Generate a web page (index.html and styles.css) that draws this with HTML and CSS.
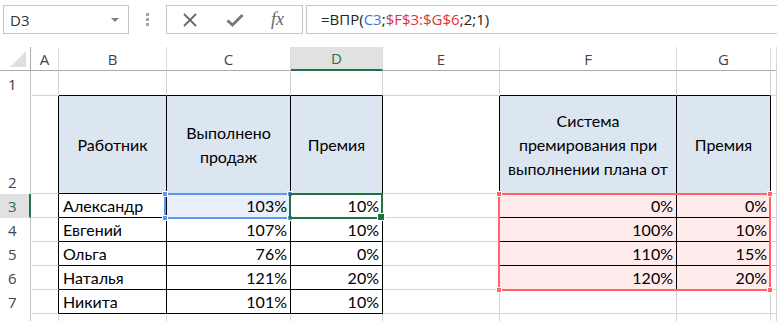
FILE: index.html
```html
<!DOCTYPE html>
<html lang="ru">
<head>
  <meta charset="UTF-8">
  <meta name="viewport" content="width=device-width, initial-scale=1.0">
  <title>ВПР — премия</title>
  <link rel="stylesheet" href="styles.css">
</head>
<body>
<div class="toolbar">
  <div class="name-box"><span>D3</span><span class="drop"></span></div>
  <div class="grip"><i></i><i></i><i></i></div>
  <div class="fx-box">
    <svg width="16" height="16" viewBox="0 0 16 16"><path d="M2 2 L14 14 M14 2 L2 14" stroke="#6a6a6a" stroke-width="1.8" fill="none"/></svg>
    <svg width="18" height="16" viewBox="0 0 18 16"><path d="M1.5 8.5 L6.5 13 L16.5 3" stroke="#7a7a7a" stroke-width="3" fill="none"/></svg>
    <span class="fx">fx</span>
  </div>
  <div class="formula">=ВПР(<span class="ref-blue">C3</span>;<span class="ref-red">$F$3:$G$6</span>;2;1)</div>
</div>

<div class="sheet-wrap">
  <table class="sheet">
    <colgroup>
      <col class="w-rh"><col class="w-a"><col class="w-b"><col class="w-c"><col class="w-d">
      <col class="w-e"><col class="w-f"><col class="w-g"><col class="w-h">
    </colgroup>
    <tr class="r-head">
      <th class="corner"></th><th>A</th><th>B</th><th>C</th><th class="col-sel">D</th><th>E</th><th>F</th><th>G</th><th></th>
    </tr>
    <tr class="r-1">
      <td class="rh">1</td><td></td><td class="bb"></td><td class="bb"></td><td class="bb"></td><td></td><td class="bb"></td><td class="bb"></td><td></td>
    </tr>
    <tr class="r-2">
      <td class="rh">2</td><td class="rb"></td>
      <td class="hd">Работник</td><td class="hd">Выполнено продаж</td><td class="hd">Премия</td>
      <td class="rb"></td>
      <td class="hd">Система премирования при выполнении плана от</td><td class="hd">Премия</td><td></td>
    </tr>
    <tr class="r-n">
      <td class="rh row-sel">3</td><td class="rb"></td>
      <td class="t">Александр</td><td class="t num ref-fill">103%</td><td class="t num">10%</td>
      <td class="rb"></td>
      <td class="t num pink">0%</td><td class="t num pink">0%</td><td></td>
    </tr>
    <tr class="r-n">
      <td class="rh">4</td><td class="rb"></td>
      <td class="t">Евгений</td><td class="t num">107%</td><td class="t num">10%</td>
      <td class="rb"></td>
      <td class="t num pink">100%</td><td class="t num pink">10%</td><td></td>
    </tr>
    <tr class="r-n">
      <td class="rh">5</td><td class="rb"></td>
      <td class="t">Ольга</td><td class="t num">76%</td><td class="t num">0%</td>
      <td class="rb"></td>
      <td class="t num pink">110%</td><td class="t num pink">15%</td><td></td>
    </tr>
    <tr class="r-n">
      <td class="rh">6</td><td class="rb"></td>
      <td class="t">Наталья</td><td class="t num">121%</td><td class="t num">20%</td>
      <td class="rb"></td>
      <td class="t num pink">120%</td><td class="t num pink">20%</td><td></td>
    </tr>
    <tr class="r-n">
      <td class="rh">7</td><td class="rb"></td>
      <td class="t">Никита</td><td class="t num">101%</td><td class="t num">10%</td>
      <td></td><td></td><td></td><td></td>
    </tr>
    <tr class="r-n">
      <td class="rh"></td><td></td><td></td><td></td><td></td><td></td><td></td><td></td><td></td>
    </tr>
  </table>

  <!-- рамки выделения поверх сетки -->
  <div class="sel sel-ref"><i class="h tl"></i><i class="h bl"></i><i class="h tr"></i><i class="h br"></i></div>
  <div class="sel sel-range"><i class="h tl"></i><i class="h bl"></i><i class="h tr"></i><i class="h br"></i></div>
  <div class="sel sel-active"><i class="fill-handle"></i></div>
</div>
</body>
</html>
```

FILE: styles.css
```css
body {
  margin: 0;
  width: 777px;
  height: 321px;
  overflow: hidden;
  background: #fff;
  font-family: "Open Sans", sans-serif;
  color: #222;
}

/* строка формул */
.toolbar {
  display: flex;
  height: 29px;
  padding-top: 5px;
}
.name-box {
  box-sizing: border-box;
  width: 126px;
  margin-left: 3px;
  border: 1px solid #c6c6c6;
  display: flex;
  align-items: center;
  justify-content: space-between;
  padding: 0 9px 0 6px;
  font-size: 15px;
  color: #333;
}
.drop {
  border-left: 4px solid transparent;
  border-right: 4px solid transparent;
  border-top: 4px solid #808080;
}
.grip {
  width: 37px;
  display: flex;
  flex-direction: column;
  align-items: center;
  justify-content: center;
  gap: 2px;
}
.grip i {
  width: 3px;
  height: 3px;
  background: #a6a6a6;
}
.fx-box {
  box-sizing: border-box;
  width: 137px;
  border: 1px solid #c6c6c6;
  display: grid;
  grid-template-columns: 1fr 1fr 1fr;
  align-items: center;
  justify-items: center;
}
.fx {
  font-family: "Liberation Serif", serif;
  font-style: italic;
  font-size: 18px;
  color: #666;
  margin-right: 4px;
}
.formula {
  flex: 1;
  margin-left: 3px;
  border: 1px solid #c6c6c6;
  border-right: none;
  padding-left: 14px;
  font-size: 15px;
  line-height: 27px;
  color: #222;
}
.ref-blue { color: #3a78d8; }
.ref-red { color: #d8373c; }

/* лист */
.sheet-wrap {
  position: relative;
  margin-top: 13px;
  height: 274px;
  overflow: hidden;
}
.sheet {
  table-layout: fixed;
  width: 777px;
  border-collapse: separate;
  border-spacing: 0;
  font-family: "Lato", sans-serif;
  font-size: 16px;
  color: #000;
}
.w-rh { width: 31px; }
.w-a { width: 28px; }
.w-b { width: 108px; }
.w-c { width: 124px; }
.w-d { width: 92px; }
.w-e { width: 117px; }
.w-f { width: 177px; }
.w-g { width: 94px; }
.w-h { width: 6px; }

.sheet td, .sheet th {
  box-sizing: border-box;
  padding: 0 4px;
  border-right: 1px solid #d4d4d4;
  border-bottom: 1px solid #d4d4d4;
  white-space: nowrap;
  overflow: hidden;
}
.r-head { height: 24px; }
.r-1 { height: 25px; }
.r-2 { height: 98px; }
.r-n { height: 24px; }
.r-n:first-of-type { height: 25px; }

.sheet th {
  font-family: "Open Sans", sans-serif;
  font-weight: normal;
  font-size: 15px;
  color: #444;
  border-bottom-color: #ababab;
  border-right-color: #dadada;
  text-align: center;
  vertical-align: middle;
}
.sheet th.corner {
  position: relative;
  border-right-color: #ababab;
}
.corner::after {
  content: "";
  position: absolute;
  right: 4px;
  bottom: 3px;
  width: 16px;
  height: 16px;
  background: #dfdfdf;
  clip-path: polygon(100% 0, 100% 100%, 0 100%);
}
.sheet th.col-sel {
  background: #e1e1e1;
  color: #217346;
  border-bottom: 2px solid #217346;
}

.sheet td.rh {
  font-family: "Open Sans", sans-serif;
  font-size: 15px;
  color: #444;
  padding: 0 0 0 8px;
  border-bottom-color: transparent;
  border-right-color: #c2c2c2;
  vertical-align: bottom;
  line-height: 22px;
}
.sheet td.row-sel {
  background: #e1e1e1;
  color: #217346;
  border-right: 2px solid #217346;
}

.sheet td.bb { border-bottom-color: #000; }
.sheet td.rb { border-right-color: #000; }
.sheet td.hd, .sheet td.t {
  border-right-color: #000;
  border-bottom-color: #000;
}
.sheet td.hd {
  background: #dce6f1;
  text-align: center;
  vertical-align: middle;
  white-space: normal;
  line-height: 24px;
  padding: 0 6px;
}
.sheet td.t {
  vertical-align: bottom;
  line-height: 22px;
}
.sheet td.num { text-align: right; padding-right: 3px; }
.sheet td.ref-fill { background: #e8f0fd; }
.sheet td.pink { background: #ffebec; }

/* рамки выделения */
.sel {
  position: absolute;
  box-sizing: border-box;
  border: 2px solid;
}
.sel-ref {
  left: 164px;
  top: 146px;
  width: 127px;
  height: 26px;
  border-color: #5e96f0;
}
.sel-range {
  left: 498px;
  top: 146px;
  width: 273px;
  height: 98px;
  border-color: #ff6369;
}
.sel-active {
  left: 289px;
  top: 146px;
  width: 94px;
  height: 26px;
  border-color: #217346;
}
.h {
  position: absolute;
  width: 6px;
  height: 6px;
  border: 1px solid #fff;
  box-sizing: border-box;
}
.sel-ref .h { background: #5e96f0; }
.sel-range .h { background: #ff6369; }
.tl { left: -4px; top: -4px; }
.tr { right: -4px; top: -4px; }
.bl { left: -4px; bottom: -4px; }
.br { right: -4px; bottom: -4px; }
.fill-handle {
  position: absolute;
  right: -4px;
  bottom: -4px;
  width: 6px;
  height: 6px;
  background: #217346;
  border: 1px solid #fff;
}
```
